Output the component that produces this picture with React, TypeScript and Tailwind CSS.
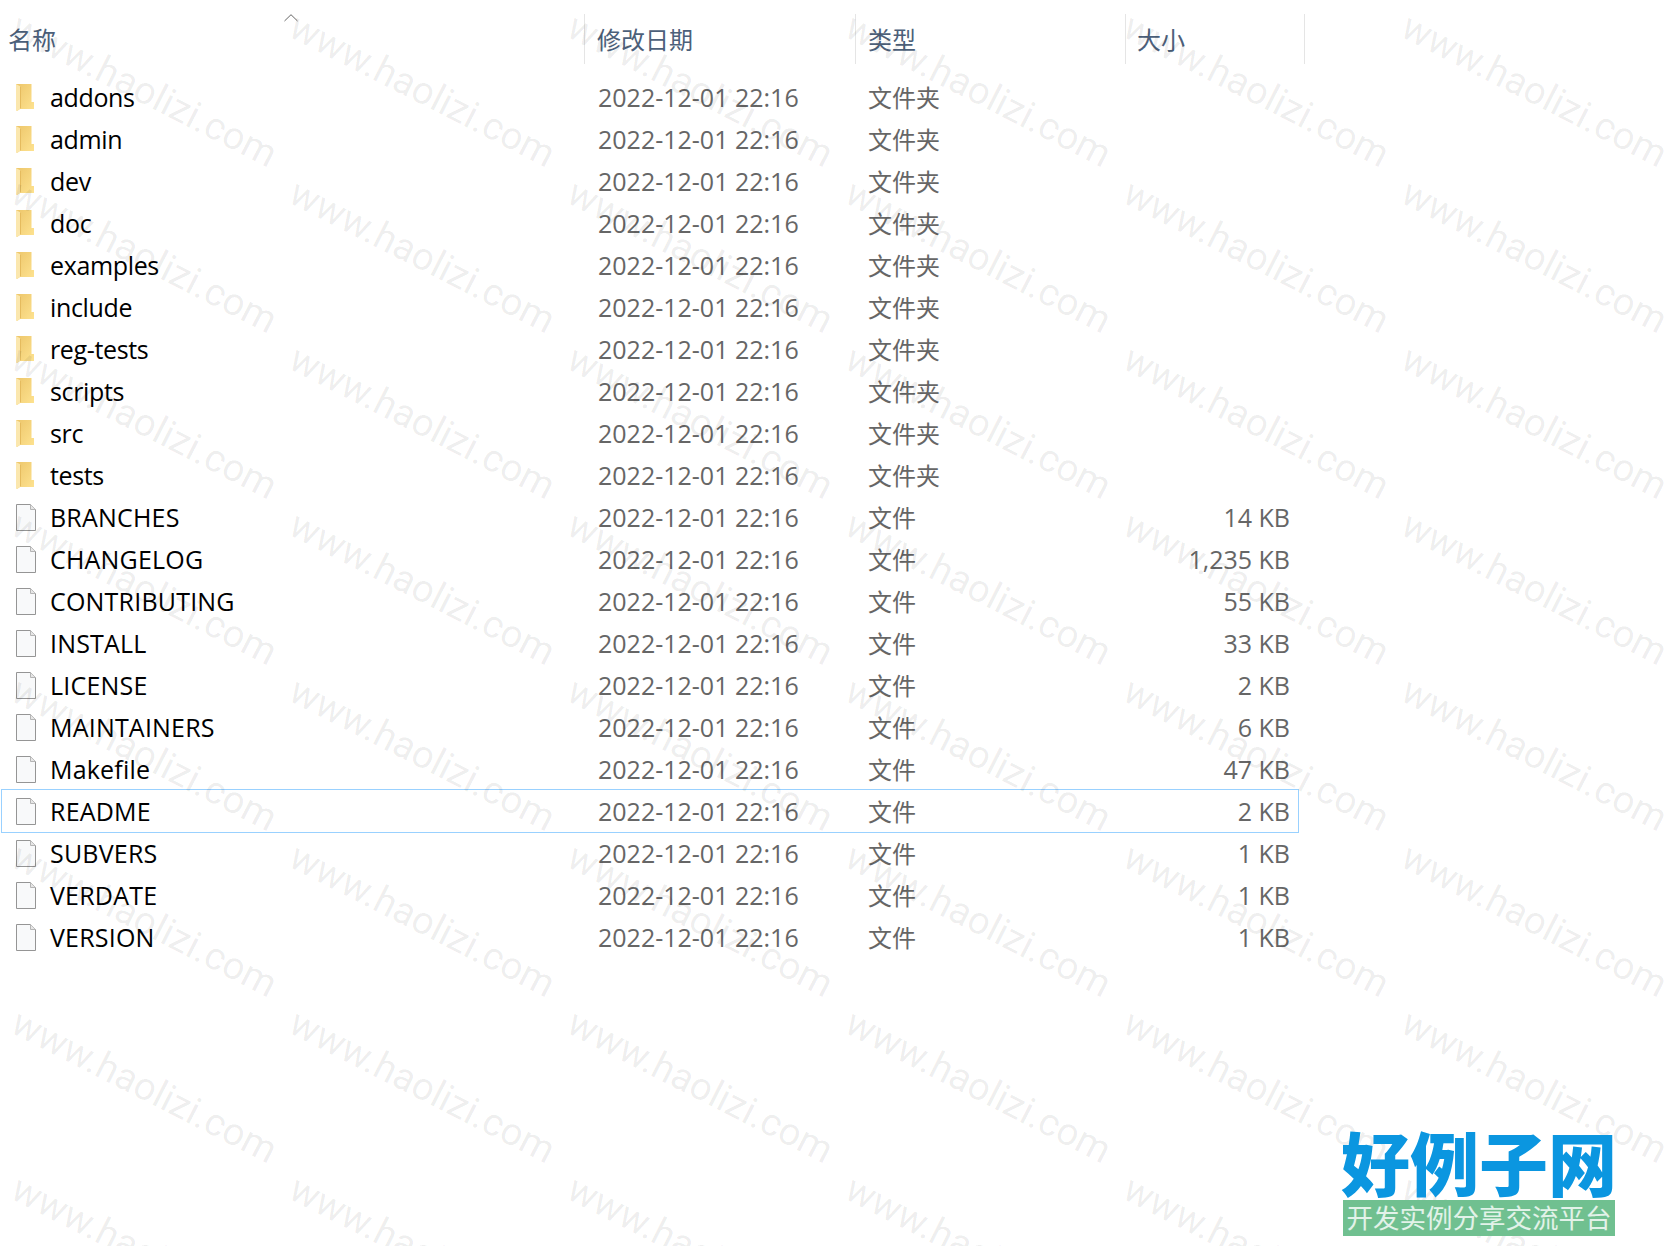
import React from 'react';

const folders = ['addons', 'admin', 'dev', 'doc', 'examples', 'include', 'reg-tests', 'scripts', 'src', 'tests'];

const files = [
  { name: 'BRANCHES', size: '14 KB' },
  { name: 'CHANGELOG', size: '1,235 KB' },
  { name: 'CONTRIBUTING', size: '55 KB' },
  { name: 'INSTALL', size: '33 KB' },
  { name: 'LICENSE', size: '2 KB' },
  { name: 'MAINTAINERS', size: '6 KB' },
  { name: 'Makefile', size: '47 KB' },
  { name: 'README', size: '2 KB' },
  { name: 'SUBVERS', size: '1 KB' },
  { name: 'VERDATE', size: '1 KB' },
  { name: 'VERSION', size: '1 KB' },
];

const FONT = 'font-["Open_Sans","Noto_Sans_CJK_SC",sans-serif]';

const FolderIcon = () => (
  <svg width="20" height="28" viewBox="0 0 20 28" className="shrink-0">
    <defs>
      <linearGradient id="folderFill" x1="0" y1="0" x2="1" y2="1">
        <stop offset="0" stopColor="#edc66a" />
        <stop offset="1" stopColor="#fee391" />
      </linearGradient>
    </defs>
    <path d="M1 1h15.500v18h2.500v7H5l-3 2-1-1z" fill="url(#folderFill)" />
    <path d="M1 1l4.500 2.500v22L2 28l-1-1z" fill="#fbe7ae" />
    <path d="M5.500 3.500v22" stroke="#e5bb5e" fill="none" />
  </svg>
);

const FileIcon = () => (
  <svg width="22" height="29" viewBox="0 0 22 29" className="shrink-0">
    <path d="M1.500 1.500h14l5 5v21h-19z" fill="#f8f9fa" stroke="#959595" />
    <path d="M15.500 1.500v5h5" fill="#e6e6e6" stroke="#b5b5b5" />
  </svg>
);

const Row = ({ name, type, size, isFolder, selected }: { name: string; type: string; size?: string; isFolder?: boolean; selected?: boolean }) => (
  <div className={`ml-[2px] flex h-[42px] w-[1296px] items-center ${selected ? 'outline outline-1 outline-[#99d1ff]' : ''}`}>
    <div className="flex w-[596px] items-center">
      <div className="ml-[13px] flex w-[35px] items-center">{isFolder ? <FolderIcon /> : <FileIcon />}</div>
      <span className={`pt-[1px] text-[25px] leading-none text-black ${isFolder ? 'tracking-[-0.35px]' : 'tracking-[0.2px]'}`}>{name}</span>
    </div>
    <span className="w-[270px] pt-[1px] text-[25px] leading-none text-[#666666]">2022-12-01 22:16</span>
    <span className="w-[270px] pt-[2px] text-[24px] leading-none text-[#666666]">{type}</span>
    <span className="w-[152px] pt-[1px] text-right text-[25px] leading-none text-[#666666]">{size}</span>
  </div>
);

const HeaderCell = ({ label, className }: { label: string; className: string }) => (
  <div className={`flex h-[50px] items-center border-r border-[#e5e5e5] pt-[2px] text-[24px] text-[#4c607a] ${className}`}>{label}</div>
);

export default function App() {
  const marks = Array.from({ length: 48 });
  return (
    <div className={`relative h-[1246px] w-[1672px] overflow-hidden bg-white ${FONT}`}>
      <div className="flex h-[76px] items-start pt-[14px]">
        <div className="relative h-[50px] w-[585px] border-r border-[#e5e5e5] pt-[1px] pl-[8px] text-[24px] leading-[50px] text-[#4c607a]">
          名称
          <svg width="14" height="8" viewBox="0 0 14 8" className="absolute left-[284px] top-0">
            <path d="M.5 7L7 .7 13.500 7" fill="none" stroke="#666" />
          </svg>
        </div>
        <HeaderCell label="修改日期" className="w-[271px] pl-[12px]" />
        <HeaderCell label="类型" className="w-[270px] pl-[12px]" />
        <HeaderCell label="大小" className="w-[179px] pl-[11px]" />
      </div>

      <div className="flex flex-col">
        {folders.map((name) => (
          <Row key={name} name={name} type="文件夹" isFolder />
        ))}
        {files.map((f) => (
          <Row key={f.name} name={f.name} type="文件" size={f.size} selected={f.name === 'README'} />
        ))}
      </div>

      {/* watermark sits over the list */}
      <div className="pointer-events-none absolute left-0 top-0 grid auto-rows-[166px] grid-cols-[repeat(6,278px)] pt-[7px] pl-[23px]">
        {marks.map((_, i) => (
          <span
            key={i}
            className="origin-top-left rotate-[27deg] font-['Roboto',sans-serif] text-[38.500px] leading-none whitespace-nowrap text-black/[0.07]"
          >
            www.haolizi.com
          </span>
        ))}
      </div>

      <div className="absolute left-[1343px] top-[1130px] flex w-[272px] flex-col items-center">
        <div className="text-[69px] leading-[68px] font-black whitespace-nowrap text-[#0b96e0]">好例子网</div>
        <div className="mt-[2px] flex h-[36px] w-full items-center justify-center bg-[#70c090] text-[26.500px] leading-none whitespace-nowrap text-white/80">
          开发实例分享交流平台
        </div>
      </div>
    </div>
  );
}
